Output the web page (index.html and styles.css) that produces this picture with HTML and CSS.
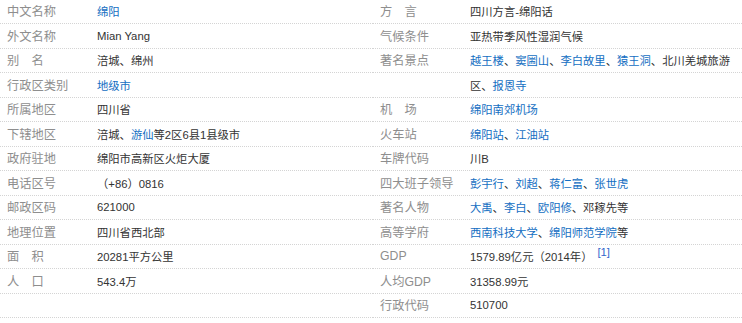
FILE: index.html
```html
<!DOCTYPE html>
<html lang="zh-CN">

<head>
    <meta charset="UTF-8">
    <meta name="viewport" content="width=device-width, initial-scale=1.0">
    <title>绵阳 基本信息</title>
    <link rel="stylesheet" href="styles.css">
</head>

<body>
    <div class="basic-info">
        <dl class="info-col info-left">
            <div class="info-row"><dt>中文名称</dt><dd><a href="#">绵阳</a></dd></div>
            <div class="info-row"><dt>外文名称</dt><dd>Mian Yang</dd></div>
            <div class="info-row"><dt>别　名</dt><dd>涪城、绵州</dd></div>
            <div class="info-row"><dt>行政区类别</dt><dd><a href="#">地级市</a></dd></div>
            <div class="info-row"><dt>所属地区</dt><dd>四川省</dd></div>
            <div class="info-row"><dt>下辖地区</dt><dd>涪城、<a href="#">游仙</a>等2区6县1县级市</dd></div>
            <div class="info-row"><dt>政府驻地</dt><dd>绵阳市高新区火炬大厦</dd></div>
            <div class="info-row"><dt>电话区号</dt><dd>（+86）0816</dd></div>
            <div class="info-row"><dt>邮政区码</dt><dd>621000</dd></div>
            <div class="info-row"><dt>地理位置</dt><dd>四川省西北部</dd></div>
            <div class="info-row"><dt>面　积</dt><dd>20281平方公里</dd></div>
            <div class="info-row"><dt>人　口</dt><dd>543.4万</dd></div>
            <div class="info-row"><dt></dt><dd></dd></div>
        </dl>
        <dl class="info-col info-right">
            <div class="info-row"><dt>方　言</dt><dd>四川方言-绵阳话</dd></div>
            <div class="info-row"><dt>气候条件</dt><dd>亚热带季风性湿润气候</dd></div>
            <div class="info-row"><dt>著名景点</dt><dd><a href="#">越王楼</a>、<a href="#">窦圌山</a>、<a href="#">李白故里</a>、<a href="#">猿王洞</a>、北川羌城旅游</dd></div>
            <div class="info-row"><dt></dt><dd>区、<a href="#">报恩寺</a></dd></div>
            <div class="info-row"><dt>机　场</dt><dd><a href="#">绵阳南郊机场</a></dd></div>
            <div class="info-row"><dt>火车站</dt><dd><a href="#">绵阳站</a>、<a href="#">江油站</a></dd></div>
            <div class="info-row"><dt>车牌代码</dt><dd>川B</dd></div>
            <div class="info-row"><dt>四大班子领导</dt><dd><a href="#">彭宇行</a>、<a href="#">刘超</a>、<a href="#">蒋仁富</a>、<a href="#">张世虎</a></dd></div>
            <div class="info-row"><dt>著名人物</dt><dd><a href="#">大禹</a>、<a href="#">李白</a>、<a href="#">欧阳修</a>、邓稼先等</dd></div>
            <div class="info-row"><dt>高等学府</dt><dd><a href="#">西南科技大学</a>、<a href="#">绵阳师范学院</a>等</dd></div>
            <div class="info-row"><dt>GDP</dt><dd>1579.89亿元（2014年）<sup class="ref"><a href="#">[1]</a></sup></dd></div>
            <div class="info-row"><dt>人均GDP</dt><dd>31358.99元</dd></div>
            <div class="info-row"><dt>行政代码</dt><dd>510700</dd></div>
        </dl>
    </div>
</body>

</html>
```

FILE: styles.css
```css
body {
    margin: 0;
    background-color: #fff;
    font-family: "Liberation Sans", Arial, "Noto Sans CJK SC", sans-serif;
    font-size: 11.3px;
    color: #333;
}

.basic-info {
    display: grid;
    grid-template-columns: 373px 1fr;
    margin-top: -0.5px;
}

.info-col {
    margin: 0;
}

.info-row {
    display: flex;
    align-items: center;
    box-sizing: border-box;
    height: 24.5px;
    border-bottom: 1px dotted #d4d4d4;
    white-space: nowrap;
}

.info-row dt {
    flex: none;
    box-sizing: border-box;
    width: 97px;
    padding-left: 7px;
    font-size: 12.25px;
    color: #8e8e8e;
}

.info-row dd {
    margin: 0;
    color: #333;
}

.info-row a {
    color: #136ec2;
    text-decoration: none;
}

.ref {
    position: relative;
    top: -5px;
    margin-left: 5px;
    font-size: 11.3px;
    line-height: 0;
    vertical-align: baseline;
}

.ref a {
    color: #3366cc;
}
```
